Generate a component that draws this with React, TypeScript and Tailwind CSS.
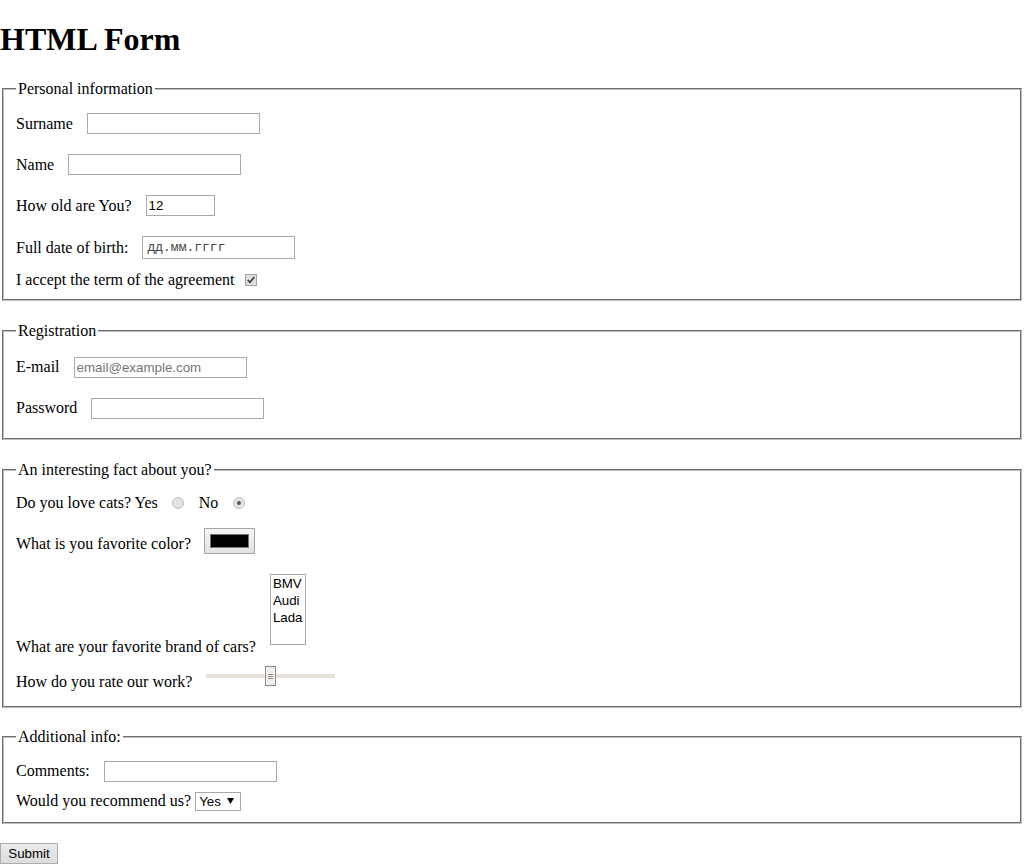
import React from "react";

const SANS = "font-['Liberation_Sans',Arial,sans-serif] text-[13.33px]";

function TextBox({
  w,
  h = 21,
  value,
  placeholder,
  className = "",
}: {
  w: number;
  h?: number;
  value?: string;
  placeholder?: string;
  className?: string;
}) {
  return (
    <input
      type="text"
      defaultValue={value}
      placeholder={placeholder}
      style={{ width: w, height: h }}
      className={`${SANS} ml-[14px] border border-[#a9a9a9] bg-white px-[2px] text-black outline-none placeholder:text-[#757575] ${className}`}
    />
  );
}

function Fieldset({
  legend,
  className = "",
  children,
}: {
  legend: string;
  className?: string;
  children: React.ReactNode;
}) {
  return (
    <fieldset
      className={`mx-[2px] [border:2px_groove_#c0c0c0] px-3 ${className}`}
    >
      <legend className="px-[2px] leading-[18.4px]">{legend}</legend>
      {children}
    </fieldset>
  );
}

function Checkbox() {
  return (
    <span className="ml-[10px] flex h-[12px] w-[12px] items-center justify-center border border-[#a5a5a5] bg-[#dedede]">
      <svg width="10" height="10" viewBox="0 0 10 10">
        <path d="M1.8 5 L4 7.3 L8.3 2" fill="none" stroke="#3c3c3c" strokeWidth="1.7" />
      </svg>
    </span>
  );
}

function Radio({ checked = false, className = "" }: { checked?: boolean; className?: string }) {
  return (
    <span
      className={`flex h-[12px] w-[12px] items-center justify-center rounded-full border border-[#c2c2c2] bg-[#e3e3e3] ${className}`}
    >
      {checked && <span className="h-[4px] w-[4px] rounded-full bg-[#5a5a5a]" />}
    </span>
  );
}

function Row({ children, className = "" }: { children: React.ReactNode; className?: string }) {
  return <div className={`flex items-center ${className}`}>{children}</div>;
}

function Label({ children }: { children: React.ReactNode }) {
  return <span className="whitespace-nowrap leading-[18px]">{children}</span>;
}

export default function App() {
  return (
    <div className="min-h-[864px] bg-white font-['Liberation_Serif','Times_New_Roman',serif] text-[16px] leading-[normal] text-black">
      <h1 className="mt-[21.44px] mb-[21.44px] text-[32px] font-bold leading-[37px]">HTML Form</h1>
      <form onSubmit={(e) => e.preventDefault()}>
        <Fieldset legend="Personal information" className="pb-[10px]">
          <Row className="mt-[15px] h-[21px]">
            <Label>Surname</Label>
            <TextBox w={173} />
          </Row>
          <Row className="mt-[20px] h-[21px]">
            <Label>Name</Label>
            <TextBox w={173} />
          </Row>
          <Row className="mt-[20px] h-[21px]">
            <Label>How old are You?</Label>
            <TextBox w={69} value="12" />
          </Row>
          <Row className="mt-[20px] h-[23px]">
            <Label>Full date of birth:</Label>
            <div className="ml-[14px] flex h-[23px] w-[153px] items-center border border-[#a9a9a9] pl-[4px] font-['Liberation_Mono','Courier_New',monospace] text-[13px] text-[#444]">
              дд.мм.гггг
            </div>
          </Row>
          <Row className="mt-[12px] h-[18px]">
            <Label>I accept the term of the agreement</Label>
            <Checkbox />
          </Row>
        </Fieldset>

        <Fieldset legend="Registration" className="mt-[21px] pb-[19px]">
          <Row className="mt-[16px] h-[21px]">
            <Label>E-mail</Label>
            <TextBox w={173} placeholder="email@example.com" />
          </Row>
          <Row className="mt-[20px] h-[21px]">
            <Label>Password</Label>
            <input
              type="password"
              className={`${SANS} ml-[14px] h-[21px] w-[173px] border border-[#a9a9a9] bg-white px-[2px] outline-none`}
            />
          </Row>
        </Fieldset>

        <Fieldset legend="An interesting fact about you?" className="mt-[21px] pb-[15px]">
          <Row className="mt-[15px] h-[18px]">
            <Label>Do you love cats? Yes</Label>
            <Radio className="ml-[14px]" />
            <span className="ml-[15px] leading-[18px]">No</span>
            <Radio checked className="ml-[15px]" />
          </Row>
          <div className="mt-[16px] flex items-start">
            <span className="mt-[7px] whitespace-nowrap leading-[18px]">What is you favorite color?</span>
            <div className="ml-[13px] h-[26px] w-[51px] border border-[#a6a6a6] bg-gradient-to-b from-[#f6f6f6] to-[#e2e2e2] pl-[5px] pt-[5px]">
              <div className="h-[14px] w-[39px] border border-[#777] bg-black" />
            </div>
          </div>
          <div className="mt-[20px] flex items-end">
            <Label>What are your favorite brand of cars?</Label>
            <div
              className={`${SANS} ml-[14px] mb-[11px] h-[71px] w-[36px] border border-[#a9a9a9] pl-[2px] leading-[17px]`}
            >
              <div>BMV</div>
              <div>Audi</div>
              <div>Lada</div>
            </div>
          </div>
          <div className="mt-[10px] flex items-start">
            <span className="mt-[7px] whitespace-nowrap leading-[18px]">How do you rate our work?</span>
            <div className="ml-[14px] flex h-[20px] w-[129px] items-center">
              <div className="h-[4px] w-[59px] bg-[#e6e1da]" />
              <div className="flex h-[20px] w-[11px] flex-col items-center justify-center gap-[1px] border border-[#8e8984] bg-[#f3f0eb]">
                <span className="h-px w-[5px] bg-[#8e8984]" />
                <span className="h-px w-[5px] bg-[#8e8984]" />
                <span className="h-px w-[5px] bg-[#8e8984]" />
              </div>
              <div className="h-[4px] flex-1 bg-[#e6e1da]" />
            </div>
          </div>
        </Fieldset>

        <Fieldset legend="Additional info:" className="mt-[20px] pb-[11px]">
          <Row className="mt-[14px] h-[21px]">
            <Label>Comments:</Label>
            <TextBox w={173} />
          </Row>
          <Row className="mt-[10px] h-[19px]">
            <Label>Would you recommend us?</Label>
            <div
              className={`${SANS} ml-[4px] flex h-[19px] w-[46px] items-center border border-[#a9a9a9] pl-[3px]`}
            >
              <span>Yes</span>
              <svg className="ml-[6px]" width="7" height="6" viewBox="0 0 7 6">
                <path d="M0 0 H7 L3.5 6 Z" fill="#000" />
              </svg>
            </div>
          </Row>
        </Fieldset>

        <button
          type="submit"
          className={`${SANS} mt-[19px] block h-[21px] w-[58px] border border-[#adadad] bg-gradient-to-b from-[#ececec] to-[#dcdcdc] text-black`}
        >
          Submit
        </button>
      </form>
    </div>
  );
}
